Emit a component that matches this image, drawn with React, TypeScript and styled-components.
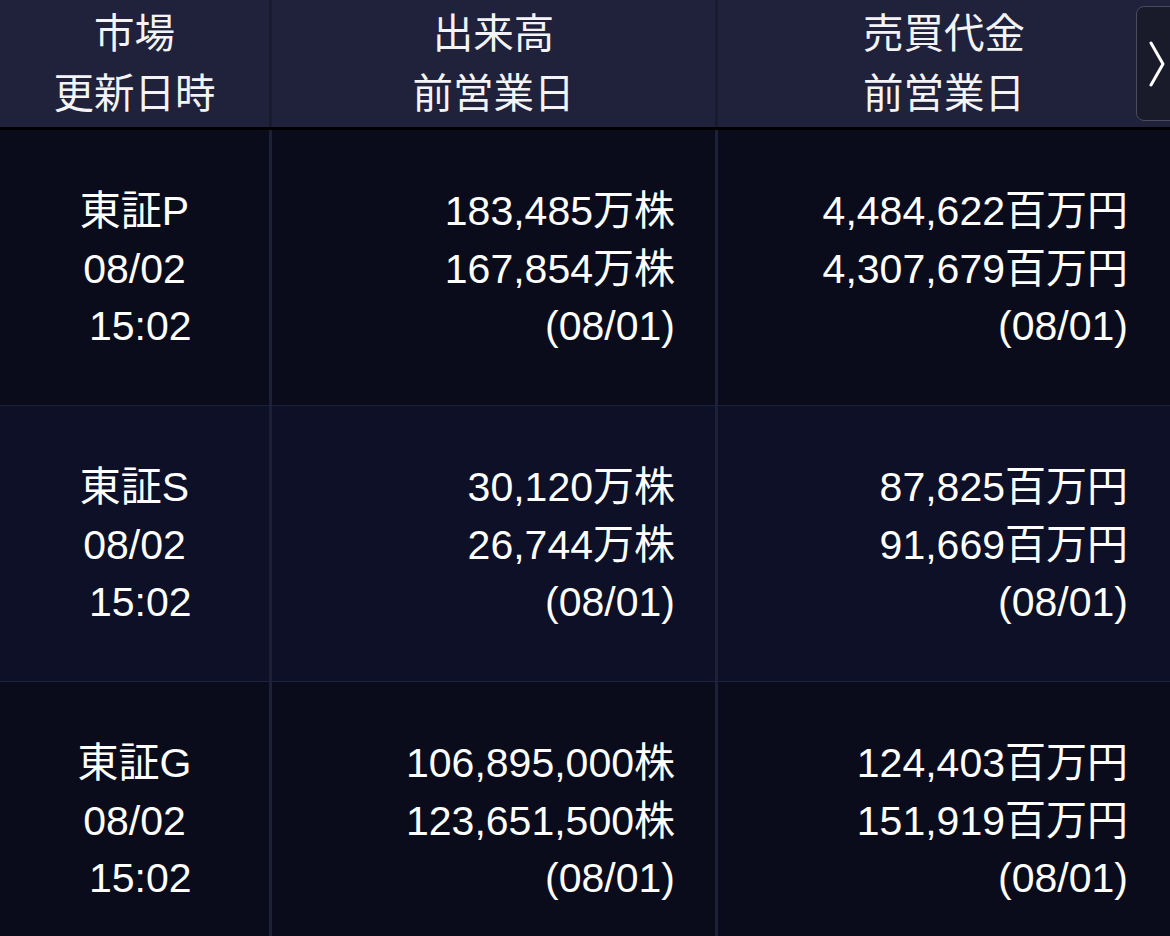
import React from 'react';
import styled, { createGlobalStyle } from 'styled-components';

const GlobalStyle = createGlobalStyle`
  html, body {
    margin: 0;
    padding: 0;
    background: #0a0c1a;
  }
  body {
    font-family: "Liberation Sans", "Noto Sans CJK JP", sans-serif;
    color: #ffffff;
  }
`;

type Market = {
  name: string;
  date: string;
  time: string;
  volume: [string, string];
  value: [string, string];
  prevDate: string;
  tone: 'dark' | 'light';
};

const markets: Market[] = [
  {
    name: '東証P',
    date: '08/02',
    time: ' 15:02',
    volume: ['183,485万株', '167,854万株'],
    value: ['4,484,622百万円', '4,307,679百万円'],
    prevDate: '(08/01)',
    tone: 'dark',
  },
  {
    name: '東証S',
    date: '08/02',
    time: ' 15:02',
    volume: ['30,120万株', '26,744万株'],
    value: ['87,825百万円', '91,669百万円'],
    prevDate: '(08/01)',
    tone: 'light',
  },
  {
    name: '東証G',
    date: '08/02',
    time: ' 15:02',
    volume: ['106,895,000株', '123,651,500株'],
    value: ['124,403百万円', '151,919百万円'],
    prevDate: '(08/01)',
    tone: 'dark',
  },
];

const App = () => {
  return (
    <>
      <GlobalStyle />
      <Screen>
        <HeaderRow>
          <HeadCell>
            <span>市場</span>
            <span>更新日時</span>
          </HeadCell>
          <HeadCell>
            <span>出来高</span>
            <span>前営業日</span>
          </HeadCell>
          <HeadCell $last>
            <span>売買代金</span>
            <span>前営業日</span>
          </HeadCell>
          <NextButton aria-label="次へ">
            <svg width="18" height="46" viewBox="0 0 18 46" fill="none">
              <polyline
                points="3,2 15,23 3,44"
                stroke="#ffffff"
                strokeWidth="3"
                strokeLinecap="round"
                strokeLinejoin="round"
              />
            </svg>
          </NextButton>
        </HeaderRow>
        {markets.map((m) => (
          <DataRow key={m.name} $tone={m.tone}>
            <MarketCell>
              <Line>{m.name}</Line>
              <Line>{m.date}</Line>
              <Line>{m.time}</Line>
            </MarketCell>
            <NumberCell $pad={40}>
              <Line>{m.volume[0]}</Line>
              <Line>{m.volume[1]}</Line>
              <Line>{m.prevDate}</Line>
            </NumberCell>
            <NumberCell $pad={42} $last>
              <Line>{m.value[0]}</Line>
              <Line>{m.value[1]}</Line>
              <Line>{m.prevDate}</Line>
            </NumberCell>
          </DataRow>
        ))}
      </Screen>
    </>
  );
};

export default App;

const Screen = styled.div`
  width: 1170px;
  height: 936px;
  overflow: hidden;
  background: #0a0c1a;
`;

const HeaderRow = styled.div`
  position: relative;
  display: grid;
  grid-template-columns: 272px 446px 1fr;
  height: 127px;
  background: #20213a;
  border-bottom: 3px solid #000000;
`;

const HeadCell = styled.div<{ $last?: boolean }>`
  display: flex;
  flex-direction: column;
  align-items: center;
  justify-content: center;
  font-size: 40.5px;
  line-height: 60px;
  color: #f4f4f6;
  border-right: ${(p) => (p.$last ? 'none' : '3px solid #1a1b31')};
`;

const NextButton = styled.button`
  position: absolute;
  top: 6px;
  left: 1136px;
  width: 48px;
  height: 115px;
  padding: 0 0 0 11px;
  display: flex;
  align-items: center;
  background: #1a1b2a;
  border: 1.5px solid #4a4b5d;
  border-radius: 8px;
  cursor: pointer;
`;

const DataRow = styled.div<{ $tone: 'dark' | 'light' }>`
  display: grid;
  grid-template-columns: 272px 446px 1fr;
  height: 275px;
  background: ${(p) => (p.$tone === 'dark' ? '#0a0c1b' : '#0d1026')};
  & + & {
    border-top: 1px solid #1e2040;
  }
`;

const MarketCell = styled.div`
  display: flex;
  flex-direction: column;
  align-items: center;
  justify-content: center;
  border-right: 3px solid #1e2039;
  font-size: 41px;
  line-height: 57.5px;
  padding-top: 4px;
`;

const NumberCell = styled.div<{ $pad: number; $last?: boolean }>`
  display: flex;
  flex-direction: column;
  align-items: flex-end;
  justify-content: center;
  padding-right: ${(p) => p.$pad}px;
  padding-top: 4px;
  border-right: ${(p) => (p.$last ? 'none' : '3px solid #1e2039')};
  font-size: 41px;
  line-height: 57.5px;
`;

const Line = styled.span`
  white-space: pre;
`;
